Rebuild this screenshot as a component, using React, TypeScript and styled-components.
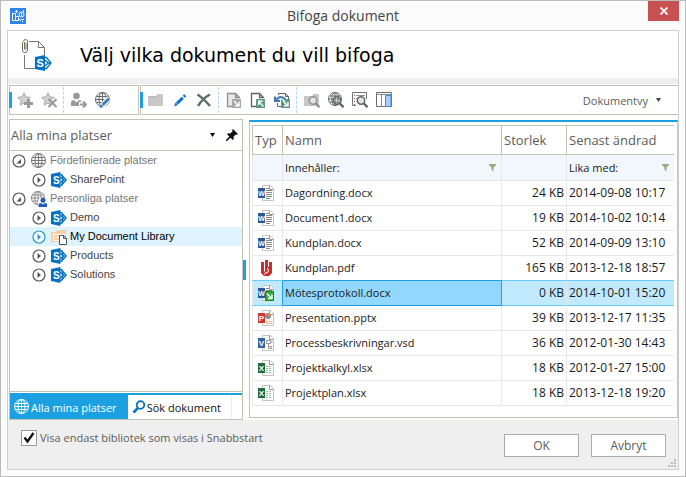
import React, { useState } from "react";
import styled, { createGlobalStyle, css } from "styled-components";

const UI_FONT = '"Open Sans", "Noto Sans", sans-serif';
const TREE_FONT = '"Liberation Sans", Arial, sans-serif';
const HEADING_FONT = '"DejaVu Sans", Verdana, sans-serif';

const c = {
  accent: "#1ba1e2",
  olive: "#c3c4b1",
  text: "#1a1a1a",
  muted: "#5c5c5c",
  footer: "#efefef",
  line: "#e8e8e8",
};

const GlobalStyle = createGlobalStyle`
  * { box-sizing: border-box; }
  body { margin: 0; font-family: ${UI_FONT}; font-size: 11px; color: ${c.text}; }
  button, input { font: inherit; color: inherit; }
  svg { display: block; flex: none; }
`;

/* ---------- layout ---------- */

const Window = styled.div`
  display: flex;
  flex-direction: column;
  min-height: 100vh;
  padding: 0 6px 6px;
  border: 1px solid #bcbcbc;
  background: #fbfbfb;
`;

const TitleBar = styled.header`
  display: grid;
  grid-template-columns: 34px 1fr 34px;
  align-items: center;
  height: 29px;
`;

const AppMark = styled.span`
  padding-left: 3px;
`;

const Title = styled.div`
  text-align: center;
  font-size: 14px;
  line-height: 20px;
  color: #444;
`;

const CloseButton = styled.button`
  align-self: start;
  justify-self: end;
  display: grid;
  place-items: center;
  width: 31px;
  height: 20px;
  padding: 0;
  border: 0;
  background: #c75050;
`;

const Content = styled.main`
  flex: 1;
  display: flex;
  flex-direction: column;
  border: 1px solid #d0d0d0;
  background: #fff;
`;

const Banner = styled.div`
  display: flex;
  align-items: center;
  gap: 26px;
  height: 53px;
  padding-left: 12px;
  border-bottom: 6px solid ${c.footer};
`;

const Heading = styled.h1`
  margin: 0;
  font: 19px/28px ${HEADING_FONT};
  color: #000;
`;

const Toolbars = styled.div`
  display: flex;
  gap: 1px;
  padding: 1px 0 0 1px;
`;

const Toolbar = styled.div<{ $grow?: boolean }>`
  display: flex;
  align-items: center;
  flex: ${(p) => (p.$grow ? "1" : "0 0 130px")};
  height: 30px;
  border: 1px solid ${c.olive};
  border-right-width: ${(p) => (p.$grow ? "0" : "1px")};
`;

const Grip = styled.span`
  width: 3px;
  height: 16px;
  margin: 0 1px 0 -1px;
  background: ${c.accent};
`;

const ToolButton = styled.button`
  display: grid;
  place-items: center;
  width: 24px;
  height: 24px;
  padding: 0;
  border: 0;
  background: none;
`;

const Separator = styled.span`
  height: 26px;
  margin: 0 3px 0 2px;
  border-left: 1px dashed #a9dcf3;
`;

const ViewButton = styled.button`
  display: flex;
  align-items: center;
  gap: 8px;
  margin-left: auto;
  padding: 0 17px 0 0;
  border: 0;
  background: none;
  font-size: 11px;
  color: ${c.muted};
`;

const Body = styled.div`
  flex: 1;
  display: grid;
  grid-template-columns: 234px 6px 1fr;
  padding: 4px 0 0 1px;
`;

const Sidebar = styled.section`
  display: flex;
  flex-direction: column;
  border: 1px solid ${c.olive};
`;

const SidebarHeader = styled.div`
  display: flex;
  align-items: center;
  gap: 11px;
  height: 31px;
  padding: 0 4px 0 1px;
  border-bottom: 1px solid ${c.olive};
`;

const SidebarTitle = styled.h2`
  flex: 1;
  margin: 0;
  font-size: 13px;
  font-weight: 400;
  color: ${c.muted};
`;

const PlainButton = styled.button`
  display: grid;
  place-items: center;
  padding: 0;
  border: 0;
  background: none;
`;

const Tree = styled.ul`
  flex: 1;
  margin: 0 0 1px;
  padding: 0;
  list-style: none;
  border-bottom: 1px solid ${c.olive};
  font: 11px/19px ${TREE_FONT};
`;

const TreeRow = styled.li<{ $level: number; $selected?: boolean }>`
  display: flex;
  align-items: center;
  height: 19px;
  padding-left: ${(p) => (p.$level ? 22 : 2)}px;
  color: ${(p) => (p.$selected ? "#000" : p.$level ? "#444" : "#777")};
  background: ${(p) => (p.$selected ? "#dff3fe" : "none")};
`;

const Expander = styled(PlainButton)`
  justify-items: start;
  width: 15px;
  margin-right: 4px;
`;

const NodeLabel = styled.span`
  padding-left: 3px;
  white-space: nowrap;
`;

const Tabs = styled.div`
  display: flex;
  height: 26px;
  border-top: 2px solid ${c.accent};
`;

const Tab = styled.button<{ $active?: boolean }>`
  display: flex;
  align-items: center;
  gap: 1px;
  height: 24px;
  padding: 0 10px 0 4px;
  border: 0;
  border-right: 1px solid ${(p) => (p.$active ? c.accent : "#eee")};
  background: ${(p) => (p.$active ? c.accent : "#fff")};
  color: ${(p) => (p.$active ? "#fff" : "#111")};
  white-space: nowrap;
`;

const Splitter = styled.div`
  display: flex;
  align-items: center;

  &::before {
    content: "";
    width: 3px;
    height: 20px;
    background: ${c.accent};
  }
`;

const ListPane = styled.section`
  margin: 1px 0 2px;
  padding: 3px 3px 0 2px;
  border: solid ${c.olive};
  border-width: 2px 1px 1px;
  border-top-color: ${c.accent};
`;

const FileTable = styled.table`
  width: 100%;
  table-layout: fixed;
  border-collapse: separate;
  border-spacing: 0;
`;

const Col = styled.col<{ $width?: number }>`
  width: ${(p) => (p.$width ? `${p.$width}px` : "auto")};
`;

const HeadCell = styled.th`
  height: 30px;
  padding: 0 2px;
  border: solid ${c.olive};
  border-width: 1px 1px 1px 0;
  font-size: 13px;
  font-weight: 400;
  text-align: left;
  white-space: nowrap;
  color: ${c.muted};

  &:first-child { border-left-width: 1px; }
  &:last-child { border-right-width: 0; }
`;

const cell = css`
  padding: 0 2px;
  border: solid ${c.line};
  border-width: 0 1px 1px 0;
  white-space: nowrap;

  &:first-child { border-left-width: 1px; }
  &:last-child { border-right-width: 0; }
`;

const FilterCell = styled.td`
  ${cell}
  height: 26px;
  background: #f2f7fe;
`;

const FilterField = styled.div`
  display: flex;
  align-items: center;
  justify-content: space-between;
  padding-right: 3px;
`;

const Row = styled.tr<{ $selected?: boolean }>`
  ${(p) =>
    p.$selected &&
    css`
      background: #c1eaff;
      td {
        border-bottom-color: #66ccff;
        box-shadow: 0 -1px 0 #66ccff;
      }
    `}
`;

const Cell = styled.td<{ $right?: boolean }>`
  ${cell}
  height: 25px;
  font-size: 12px;
  line-height: 16px;
  text-align: ${(p) => (p.$right ? "right" : "left")};
`;

const NameCell = styled(Cell)<{ $selected?: boolean }>`
  font-size: 11px;
  ${(p) =>
    p.$selected &&
    css`
      && {
        background: #91d7ff;
        border-color: #1f9fdf;
        box-shadow: 0 -1px 0 #1f9fdf, -1px 0 0 #1f9fdf;
      }
    `}
`;

const IconCell = styled(Cell)`
  padding-left: 5px;
`;

const Footer = styled.footer`
  position: relative;
  display: flex;
  align-items: center;
  gap: 12px;
  height: 49px;
  padding: 0 12px 0 13px;
  background: ${c.footer};
`;

const CheckLabel = styled.label`
  display: flex;
  align-items: center;
  gap: 3px;
  margin: 0 auto 14px 0;
  color: ${c.muted};
`;

const CheckWrap = styled.span`
  display: grid;
  place-items: center;

  > * { grid-area: 1 / 1; }
  > svg { pointer-events: none; visibility: hidden; }
  > input:checked + svg { visibility: visible; }
`;

const CheckBox = styled.input`
  appearance: none;
  width: 16px;
  height: 16px;
  margin: 0;
  border: 1px solid #999;
  background: #fff;
`;

const DialogButton = styled.button`
  width: 75px;
  height: 23px;
  margin-top: 2px;
  padding: 0;
  border: 1px solid #acacac;
  background: #fff;
  font-size: 12px;
  line-height: 20px;
  color: ${c.muted};
`;

const ResizeGrip = styled.svg`
  position: absolute;
  right: 2px;
  bottom: 2px;
`;

/* ---------- icons ---------- */

const Svg = ({ children, size = 16 }: { children: React.ReactNode; size?: number }) => (
  <svg width={size} height={size} viewBox={`0 0 ${size} ${size}`} fill="none" aria-hidden="true">
    {children}
  </svg>
);

const AppIcon = () => (
  <Svg>
    <path fill="#2f86ea" d="M0 0h16v16H0z" />
    <path stroke="#fff" d="M2.5 12.5v-7h3v7zM5.5 8.5h3v4h-6M6.5 2v3M5 3.5h3" />
    <circle cx="11.5" cy="6.5" r="2.5" stroke="#fff" />
    <path stroke="#fff" d="M11.5 5v3M9 11l2 2M11 11.5h3M12 13.5h1M13.5 2v2" />
  </Svg>
);

const SharePoint = () => (
  <Svg>
    <path stroke="#0072c6" strokeWidth="1.2" d="M9 2.5h1.5L15.2 8l-4.7 5.5H9M9 5l3.3 3L9 11M12 8h3M10.5 3l2 5-2 5" />
    <path fill="#0072c6" d="M0 2l9.5-2v16L0 14z" />
    <text x="2" y="12" fontFamily="Liberation Sans" fontWeight="700" fontSize="10" fill="#fff">S</text>
  </Svg>
);

const BannerIcon = () => (
  <svg width="34" height="34" viewBox="0 0 34 34" fill="none" aria-hidden="true">
    <path stroke="#777" d="M9 3.5h9.5l6 6V17M18.5 3.5v6h6M4.5 17v13.5H15" />
    <path stroke="#75705f" d="M2.5 4v8a2.5 2.5 0 0 0 5 0V3.5a2 2 0 0 0-4 0M4.5 4v7a.8.8 0 0 0 1.5 0V5" />
    <path stroke="#0072c6" strokeWidth="1.3" d="M25 19.5h1.5L31 25l-4.5 5.5H25M25 22l3.3 3-3.3 3M28 25h3" />
    <path fill="#0072c6" d="M15 19l10-2v16l-10-2z" />
    <text x="16.5" y="29" fontFamily="Liberation Sans" fontWeight="700" fontSize="11" fill="#fff">S</text>
  </svg>
);

const Star = () => (
  <path fill="#d2d2d2" stroke="#aaa" d="M7 .8l1.9 4 4.3.6-3.1 3.1.8 4.5L7 11l-3.9 2 .8-4.5L.8 5.4l4.3-.6z" />
);

const StarAdd = () => (
  <Svg>
    <Star />
    <path stroke="#999" strokeWidth="3" d="M11.5 7v9M7 11.5h9" />
  </Svg>
);

const StarRemove = () => (
  <Svg>
    <Star />
    <path stroke="#999" strokeWidth="2" d="M7.5 7l8 8M15.5 7l-8 8" />
  </Svg>
);

const UserGo = () => (
  <Svg>
    <circle cx="5.5" cy="4" r="3.3" fill="#999" />
    <path fill="#999" d="M0 14v-3q0-3 3-3l2.5 2.5L8 8q2 0 2.5 2H8v4z" />
    <path stroke="#999" strokeWidth="2" d="M9 12.5h5.5M12 9.5l3 3-3 3" />
  </Svg>
);

const GlobeLines = ({ color = "#686868", r = 7 }: { color?: string; r?: number }) => (
  <g stroke={color}>
    <circle cx={r + 0.5} cy={r + 0.5} r={r} />
    <ellipse cx={r + 0.5} cy={r + 0.5} rx={r / 2} ry={r} />
    <path d={`M${r + 0.5} 0V${r * 2 + 1}M0 ${r + 0.5}H${r * 2 + 1}M1.5 ${r - 2.5}H${r * 2 - 0.5}M1.5 ${r + 3.5}H${r * 2 - 0.5}`} />
  </g>
);

const Globe = ({ color }: { color?: string }) => (
  <Svg>
    <GlobeLines color={color} />
  </Svg>
);

const GlobeEdit = () => (
  <Svg>
    <GlobeLines />
    <path stroke="#fff" strokeWidth="5" d="M7 14l7-8" />
    <path stroke="#3d7cc0" strokeWidth="3" d="M7.5 13L14 6.5" />
    <path fill="#3d7cc0" d="M4.5 16l1-4 3 3z" />
  </Svg>
);

const GlobeUser = () => (
  <Svg>
    <GlobeLines color="#888" r={6.5} />
    <path fill="#fff" d="M8 7h8v9H7v-5z" />
    <circle cx="12" cy="9.3" r="2.5" fill="#1c5bc0" />
    <path fill="#1c5bc0" d="M7.5 16v-2q0-2 2.5-2l2 1.5 2-1.5q2.5 0 2 2v2z" />
  </Svg>
);

const Folder = () => (
  <Svg>
    <path fill="#c8c8c8" d="M0 4h8l1.5-2H15v12H0z" />
    <path stroke="#b5b5b5" d="M0 4.5h8.5" />
  </Svg>
);

const Pencil = () => (
  <Svg>
    <path stroke="#0a72c8" strokeWidth="3" d="M5 11.5l5.8-5.8M11.8 4.7l1.5-1.5" />
    <path fill="#0a72c8" d="M2 14.5l1.5-4L6 13z" />
  </Svg>
);

const Delete = () => (
  <Svg>
    <path stroke="#5c7067" strokeWidth="2.4" d="M1.5 2.5Q7 6 14 14M14 2.5Q7 6 2 14" />
  </Svg>
);

const DocArrow = ({ fill = "#a8a8a8", page = "#8d8d8d", bg = "#e8e8e8", flip = false }) => (
  <>
    <path fill={bg} d="M1.5 1.5h8l4 4V15h-12z" />
    <path stroke={page} strokeWidth="1.3" d="M6 14.5H1.5v-13h8l4 4V6M9.5 1.5v4h4" />
    <path fill={fill} d="M6 7h9v9H6z" />
    <path stroke="#fff" strokeWidth="1.4" d={flip ? "M13.5 14.5l-5-5M8.7 13V9.2h4" : "M8 9l5 5M13 9.8v4H9"} />
  </>
);

const DocOut = () => <Svg><DocArrow /></Svg>;
const DocIn = () => <Svg><DocArrow fill="#5d9c80" page="#54685f" bg="#fff" flip /></Svg>;

const DocSync = () => (
  <Svg>
    <path stroke="#666" d="M4.5 3V1.5h7l3 3V8M11.5 1.5v3h3M3.5 11v3.5H7" />
    <path fill="#5d9c80" d="M7 7h9v9H7z" />
    <path stroke="#fff" strokeWidth="1.4" d="M9 9l5 5M14 9.8v4h-4" />
    <path stroke="#fff" strokeWidth="4" d="M3 8q3-5 9 0" />
    <path stroke="#3f78b8" strokeWidth="2" d="M2.5 8q3.5-6 9.5 0M1 4.5V9h5" />
  </Svg>
);

const Magnifier = ({ color = "#5f6b66", glass = "#e4e4e4" }: { color?: string; glass?: string }) => (
  <>
    <circle cx="9" cy="8.5" r="3.7" fill={glass} stroke={color} strokeWidth="1.5" />
    <path stroke={color} strokeWidth="2.4" d="M11.5 11l4 4.3" />
  </>
);

const FolderSearch = () => (
  <Svg>
    <path fill="#c8c8c8" d="M0 4h8l1.5-2H15v12H0z" />
    <Magnifier color="#929292" />
  </Svg>
);

const GlobeSearch = () => (
  <Svg>
    <GlobeLines r={6.5} />
    <Magnifier glass="none" />
  </Svg>
);

const ListSearch = () => (
  <Svg>
    <path stroke="#6c7773" d="M4 13.5H.5V.5h14V7" />
    <path stroke="#b04a6c" strokeDasharray="1 2" d="M2.5 3v10" />
    <path stroke="#8b9490" d="M4 3.5h9M4 6.5h3" />
    <Magnifier />
  </Svg>
);

const PaneLayout = () => (
  <Svg>
    <path fill="#fff" stroke="#6d6d6d" d="M.5.5h15v14H.5z" />
    <path stroke="#8a8a8a" d="M0 2.5h16M5.5 3v12" />
    <path fill="#a6cdfa" stroke="#3b8fe8" d="M9.5 3.5H15v11H9.5z" />
  </Svg>
);

const Caret = ({ color = "#444" }: { color?: string }) => (
  <svg width="5" height="4" viewBox="0 0 5 4" aria-hidden="true">
    <path fill={color} d="M0 0h5L2.5 4z" />
  </svg>
);

const Pin = () => (
  <Svg size={12}>
    <path fill="#111" d="M7 0l5 5-1 .8-1.3-.3-2.2 2.2.3 2.3-1 1-2.3-2.3L1 12H0v-1l3.3-3.5L1 5.2l1-1 2.3.3 2.2-2.2L6.2 1z" />
  </Svg>
);

const ExpanderIcon = ({ open, color = "#555" }: { open?: boolean; color?: string }) => (
  <svg width="14" height="14" viewBox="0 0 14 14" fill="none" aria-hidden="true">
    <circle cx="7" cy="7" r="6" fill="#fff" stroke={color} strokeWidth="1.2" />
    <path fill={color} d={open ? "M9 5v4.5H4.5z" : "M5.5 4L9 7l-3.5 3z"} />
  </svg>
);

const Library = () => (
  <Svg>
    <path fill="#f8cfa5" d="M0 3h5l1-2h9v12H0z" />
    <path stroke="#fff" d="M2.5 5.5h11v6h-11zM5 8.5h7M4.5 8v1" />
    <path fill="#fff" stroke="#555" d="M8.5 6.5h4l3 3v6h-7zM12.5 6.5v3h3" />
  </Svg>
);

const SearchBlue = () => (
  <Svg size={14}>
    <circle cx="8.5" cy="5" r="3.8" fill="#fff" stroke="#0072c6" strokeWidth="1.8" />
    <path stroke="#0072c6" strokeWidth="2.6" d="M6 7.8l-4.5 4.7" />
  </Svg>
);

const Funnel = () => (
  <svg width="7" height="7" viewBox="0 0 7 7" aria-hidden="true">
    <path fill="#9fa878" d="M0 0h7v1L4.5 3.5V7l-2-1V3.5L0 1z" />
  </svg>
);

type Kind = "word" | "pdf" | "wordOut" | "ppt" | "visio" | "excel";

const badge: Record<Exclude<Kind, "pdf">, [string, string]> = {
  word: ["#2b5797", "W"],
  wordOut: ["#2b5797", "W"],
  ppt: ["#cf3636", "P"],
  visio: ["#3763a4", "V"],
  excel: ["#1e6b3c", "X"],
};

const FileIcon = ({ kind }: { kind: Kind }) => {
  if (kind === "pdf") {
    return (
      <Svg>
        <path fill="#c92d2d" d="M3 2h3v9l1 1V0h3v7h1V2h3v11l-3 3H6l-3-3z" />
        <path stroke="#fff" d="M6.5 14.5l1-2 1.5.5 1.5-2-1-3" />
      </Svg>
    );
  }
  const [color, letter] = badge[kind];
  return (
    <Svg>
      <path fill="#fff" stroke="#c4c4c4" d="M4.5.5h8l3 3v12h-11z" />
      <path stroke="#9a9a9a" d="M11.5.5v4h4" />
      {(kind === "word" || kind === "wordOut") && (
        <path stroke="#888" d="M8 3.5h3M8 5.5h6M8 7.5h6M8 9.5h6M8 11.5h6M8 13.5h4" />
      )}
      {kind === "ppt" && (
        <>
          <circle cx="10" cy="6" r="3" fill="#888" />
          <path fill="#e58a52" d="M10 6V3a3 3 0 0 1 3 3z" />
          <path stroke="#f2bd8b" d="M8 11.5h6M8 13.5h6" />
        </>
      )}
      {kind === "visio" && <path stroke="#999" d="M8.5 5.5h4v3h-4zM10.5 8.5v3M10.5 11.5h3v2h-3zM12.5 7h2" />}
      {kind === "excel" && <path stroke="#94c9a0" strokeDasharray="2 1" d="M8 6.5h6M8 8.5h6M8 10.5h6M8 12.5h6" />}
      <path fill={color} d="M0 3h7v10H0z" />
      <text x="3.5" y="11" textAnchor="middle" fontFamily="Liberation Sans" fontWeight="700" fontSize={letter === "W" ? 7 : 8} fill="#fff">
        {letter}
      </text>
      {kind === "wordOut" && (
        <>
          <path fill="#2fae3a" stroke="#128a20" d="M7.5 6.5h8v9h-8z" />
          <path stroke="#fff" strokeWidth="1.4" d="M9 8.5l4.5 5M14 9.5v4h-4" />
        </>
      )}
    </Svg>
  );
};

/* ---------- data ---------- */

const tree = [
  { label: "Fördefinierade platser", level: 0, icon: <Globe color="#777" /> },
  { label: "SharePoint", level: 1, icon: <SharePoint /> },
  { label: "Personliga platser", level: 0, icon: <GlobeUser /> },
  { label: "Demo", level: 1, icon: <SharePoint /> },
  { label: "My Document Library", level: 1, icon: <Library /> },
  { label: "Products", level: 1, icon: <SharePoint /> },
  { label: "Solutions", level: 1, icon: <SharePoint /> },
];

const files: { kind: Kind; name: string; size: string; changed: string }[] = [
  { kind: "word", name: "Dagordning.docx", size: "24 KB", changed: "2014-09-08 10:17" },
  { kind: "word", name: "Document1.docx", size: "19 KB", changed: "2014-10-02 10:14" },
  { kind: "word", name: "Kundplan.docx", size: "52 KB", changed: "2014-09-09 13:10" },
  { kind: "pdf", name: "Kundplan.pdf", size: "165 KB", changed: "2013-12-18 18:57" },
  { kind: "wordOut", name: "Mötesprotokoll.docx", size: "0 KB", changed: "2014-10-01 15:20" },
  { kind: "ppt", name: "Presentation.pptx", size: "39 KB", changed: "2013-12-17 11:35" },
  { kind: "visio", name: "Processbeskrivningar.vsd", size: "36 KB", changed: "2012-01-30 14:43" },
  { kind: "excel", name: "Projektkalkyl.xlsx", size: "18 KB", changed: "2012-01-27 15:00" },
  { kind: "excel", name: "Projektplan.xlsx", size: "18 KB", changed: "2013-12-18 19:20" },
];

const Tool = ({ label, children }: { label: string; children: React.ReactNode }) => (
  <ToolButton type="button" aria-label={label}>{children}</ToolButton>
);

export default function App() {
  const [node, setNode] = useState("My Document Library");
  const [file, setFile] = useState("Mötesprotokoll.docx");

  return (
    <>
      <GlobalStyle />
      <Window>
        <TitleBar>
          <AppMark><AppIcon /></AppMark>
          <Title>Bifoga dokument</Title>
          <CloseButton type="button" aria-label="Stäng">
            <svg width="8" height="8" viewBox="0 0 8 8"><path stroke="#fff" strokeWidth="1.8" d="M.5.5l7 7M7.5.5l-7 7" /></svg>
          </CloseButton>
        </TitleBar>
        <Content>
          <Banner>
            <BannerIcon />
            <Heading>Välj vilka dokument du vill bifoga</Heading>
          </Banner>
          <Toolbars>
            <Toolbar role="toolbar">
              <Grip />
              <Tool label="Lägg till favorit"><StarAdd /></Tool>
              <Tool label="Ta bort favorit"><StarRemove /></Tool>
              <Separator />
              <Tool label="Byt användare"><UserGo /></Tool>
              <Tool label="Redigera plats"><GlobeEdit /></Tool>
            </Toolbar>
            <Toolbar role="toolbar" $grow>
              <Grip />
              <Tool label="Ny mapp"><Folder /></Tool>
              <Tool label="Redigera"><Pencil /></Tool>
              <Tool label="Ta bort"><Delete /></Tool>
              <Separator />
              <Tool label="Checka ut"><DocOut /></Tool>
              <Tool label="Checka in"><DocIn /></Tool>
              <Tool label="Ångra utcheckning"><DocSync /></Tool>
              <Separator />
              <Tool label="Sök i mapp"><FolderSearch /></Tool>
              <Tool label="Sök på plats"><GlobeSearch /></Tool>
              <Tool label="Sök i lista"><ListSearch /></Tool>
              <Tool label="Förhandsgranskning"><PaneLayout /></Tool>
              <ViewButton type="button">Dokumentvy <Caret /></ViewButton>
            </Toolbar>
          </Toolbars>
          <Body>
            <Sidebar>
              <SidebarHeader>
                <SidebarTitle>Alla mina platser</SidebarTitle>
                <PlainButton type="button" aria-label="Meny"><Caret color="#000" /></PlainButton>
                <PlainButton type="button" aria-label="Fäst"><Pin /></PlainButton>
              </SidebarHeader>
              <Tree>
                {tree.map((n) => (
                  <TreeRow key={n.label} $level={n.level} $selected={n.label === node} onClick={() => setNode(n.label)}>
                    <Expander type="button" aria-label={n.label}>
                      <ExpanderIcon open={n.level === 0} color={n.label === node ? "#1b9bdc" : "#555"} />
                    </Expander>
                    {n.icon}
                    <NodeLabel>{n.label}</NodeLabel>
                  </TreeRow>
                ))}
              </Tree>
              <Tabs>
                <Tab type="button" $active><Globe color="#fff" />Alla mina platser</Tab>
                <Tab type="button"><SearchBlue />Sök dokument</Tab>
              </Tabs>
            </Sidebar>
            <Splitter />
            <ListPane>
              <FileTable>
                <colgroup>
                  <Col $width={31} /><Col /><Col $width={65} /><Col $width={107} />
                </colgroup>
                <thead>
                  <tr>
                    <HeadCell>Typ</HeadCell>
                    <HeadCell>Namn</HeadCell>
                    <HeadCell>Storlek</HeadCell>
                    <HeadCell>Senast ändrad</HeadCell>
                  </tr>
                </thead>
                <tbody>
                  <tr>
                    <FilterCell />
                    <FilterCell>
                      <FilterField>Innehåller:<PlainButton type="button" aria-label="Filtrera namn"><Funnel /></PlainButton></FilterField>
                    </FilterCell>
                    <FilterCell />
                    <FilterCell>
                      <FilterField>Lika med:<PlainButton type="button" aria-label="Filtrera datum"><Funnel /></PlainButton></FilterField>
                    </FilterCell>
                  </tr>
                  {files.map((f) => (
                    <Row key={f.name} $selected={f.name === file} onClick={() => setFile(f.name)}>
                      <IconCell><FileIcon kind={f.kind} /></IconCell>
                      <NameCell $selected={f.name === file}>{f.name}</NameCell>
                      <Cell $right>{f.size}</Cell>
                      <Cell>{f.changed}</Cell>
                    </Row>
                  ))}
                </tbody>
              </FileTable>
            </ListPane>
          </Body>
          <Footer>
            <CheckLabel>
              <CheckWrap>
                <CheckBox type="checkbox" defaultChecked />
                <svg width="12" height="12" viewBox="0 0 12 12" fill="none"><path stroke="#111" strokeWidth="2.4" d="M1.5 5.5l3 4 6-8.5" /></svg>
              </CheckWrap>
              Visa endast bibliotek som visas i Snabbstart
            </CheckLabel>
            <DialogButton type="button">OK</DialogButton>
            <DialogButton type="button">Avbryt</DialogButton>
            <ResizeGrip width="8" height="8" viewBox="0 0 8 8">
              <path fill="#bbb" d="M6 0h2v2H6zM3 3h2v2H3zM6 3h2v2H6zM0 6h2v2H0zM3 6h2v2H3zM6 6h2v2H6z" />
            </ResizeGrip>
          </Footer>
        </Content>
      </Window>
    </>
  );
}
